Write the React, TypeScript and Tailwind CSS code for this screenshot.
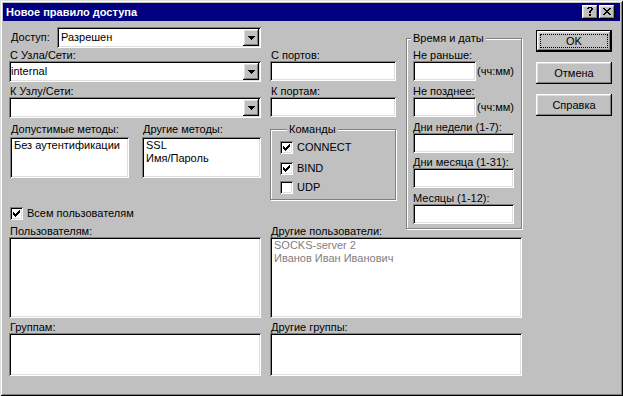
import type { ReactNode } from "react";

const sunken =
  "bg-white shadow-[inset_1px_1px_0_#808080,inset_-1px_-1px_0_#fff,inset_2px_2px_0_#000,inset_-2px_-2px_0_#dfdfdf]";
const raised =
  "bg-[#c0c0c0] shadow-[inset_-1px_-1px_0_#000,inset_1px_1px_0_#fff,inset_-2px_-2px_0_#808080,inset_2px_2px_0_#dfdfdf]";
const etched = "border border-[#808080] shadow-[1px_1px_0_#fff,inset_1px_1px_0_#fff]";

const CHECK = ["......#", ".....##", "#...###", "##.###.", "#####..", ".###...", "..#...."];
const ARROW = ["#######", ".#####.", "..###..", "...#..."];
const CLOSE = ["##....##", ".##..##.", "..####..", "...##...", "..####..", ".##..##.", "##....##"];
const HELP = [".####.", "##..##", "....##", "...##.", "..##..", "..##..", "......", "..##..", "..##.."];

function Pix({ rows }: { rows: string[] }) {
  const w = rows[0].length;
  const h = rows.length;
  return (
    <svg width={w} height={h} viewBox={`0 0 ${w} ${h}`} shapeRendering="crispEdges" className="block">
      {rows.flatMap((r, y) =>
        r.split("").map((c, x) =>
          c === "#" ? <rect key={`${x}-${y}`} x={x} y={y} width={1} height={1} fill="#000" /> : null
        )
      )}
    </svg>
  );
}

function Label({ children, className = "" }: { children: ReactNode; className?: string }) {
  return <div className={`h-[12px] whitespace-nowrap leading-[13px] ${className}`}>{children}</div>;
}

function Edit({ className = "" }: { className?: string }) {
  return <div className={`h-[20px] ${sunken} ${className}`} />;
}

function Combo({ value, className = "", pad = "pl-[2px]" }: { value: string; className?: string; pad?: string }) {
  return (
    <div className={`flex h-[21px] items-center pr-[2px] ${sunken} ${className}`}>
      <span className={`flex-1 leading-[13px] ${pad}`}>{value}</span>
      <span className={`flex h-[17px] w-[16px] items-start justify-center pt-[7px] ${raised}`}>
        <Pix rows={ARROW} />
      </span>
    </div>
  );
}

function ListBox({ items = [], className = "", gray = false }: { items?: string[]; className?: string; gray?: boolean }) {
  return (
    <div className={`overflow-hidden pl-[4px] pt-[2px] leading-[13px] ${sunken} ${gray ? "text-[#808080]" : ""} ${className}`}>
      {items.map((it) => (
        <div key={it} className="whitespace-nowrap">{it}</div>
      ))}
    </div>
  );
}

function Check({ checked, label, className = "" }: { checked: boolean; label: string; className?: string }) {
  return (
    <div className={`flex h-[13px] items-center ${className}`}>
      <span className={`flex h-[13px] w-[13px] shrink-0 items-center justify-center ${sunken}`}>
        {checked && <Pix rows={CHECK} />}
      </span>
      <span className="ml-[4px] whitespace-nowrap leading-[13px]">{label}</span>
    </div>
  );
}

function GroupBox({
  title,
  titleClass,
  className = "",
  children,
}: {
  title: string;
  titleClass: string;
  className?: string;
  children: ReactNode;
}) {
  return (
    <div className={`flex flex-col ${etched} ${className}`}>
      <span className={`-mt-[7px] block h-[13px] w-fit bg-[#c0c0c0] px-[2px] leading-[13px] ${titleClass}`}>
        {title}
      </span>
      {children}
    </div>
  );
}

function Button({ children, isDefault = false, className = "" }: { children: ReactNode; isDefault?: boolean; className?: string }) {
  if (isDefault) {
    return (
      <div className={`flex h-[22px] w-[76px] border border-black p-[3px] ${raised} ${className}`}>
        <span className="flex flex-1 items-center justify-center border border-dotted border-black leading-[13px]">
          {children}
        </span>
      </div>
    );
  }
  return (
    <div className={`flex h-[22px] w-[76px] items-center justify-center leading-[13px] ${raised} ${className}`}>
      {children}
    </div>
  );
}

export default function App() {
  return (
    <div className="h-[396px] w-[623px] bg-[#c0c0c0] p-[3px] font-['Liberation_Sans',Arial,sans-serif] text-[11px] text-black shadow-[inset_1px_1px_0_#dfdfdf,inset_-1px_-1px_0_#000,inset_2px_2px_0_#fff,inset_-2px_-2px_0_#808080]">
      {/* title bar */}
      <div className="flex h-[18px] items-center bg-[#000080] pl-[3px] pr-[5px]">
        <span className="flex-1 font-bold leading-[18px] text-white">Новое правило доступа</span>
        <span className={`flex h-[14px] w-[16px] justify-center pt-[2px] ${raised}`}>
          <Pix rows={HELP} />
        </span>
        <span className={`ml-[1px] flex h-[14px] w-[16px] justify-center pt-[3px] ${raised}`}>
          <Pix rows={CLOSE} />
        </span>
      </div>

      <div className="flex pl-[6px]">
        <div className="flex w-[513px] flex-col">
          <div className="flex h-[204px]">
            {/* left column */}
            <div className="flex w-[252px] flex-col">
              <div className="mt-[6px] flex h-[21px] items-center">
                <span className="w-[48px] pl-[2px] leading-[13px]">Доступ:</span>
                <Combo value="Разрешен" className="flex-1" pad="pl-[4px]" />
              </div>
              <Label className="mt-[1px] pl-[1px]">С Узла/Сети:</Label>
              <Combo value="internal" />
              <Label className="mt-[3px] pl-[1px]">К Узлу/Сети:</Label>
              <Combo value="" />
              <div className="mt-[5px] flex">
                <div className="ml-[1px] w-[119px]">
                  <Label className="pl-[1px]">Допустимые методы:</Label>
                  <ListBox className="mt-[2px] h-[41px]" items={["Без аутентификации"]} />
                </div>
                <div className="ml-auto w-[119px]">
                  <Label className="pl-[1px]">Другие методы:</Label>
                  <ListBox className="mt-[2px] h-[41px]" items={["SSL", "Имя/Пароль"]} />
                </div>
              </div>
              <Check checked label="Всем пользователям" className="ml-[1px] mt-[29px]" />
            </div>

            {/* ports / commands */}
            <div className="ml-[9px] flex w-[126px] flex-col">
              <Label className="mt-[28px] pl-[1px]">С портов:</Label>
              <Edit />
              <Label className="mt-[4px] pl-[1px]">К портам:</Label>
              <Edit />
              <GroupBox title="Команды" titleClass="ml-[7px]" className="mt-[12px] h-[71px] pl-[9px]">
                <Check checked label="CONNECT" className="mt-[5px]" />
                <Check checked label="BIND" className="mt-[8px]" />
                <Check checked={false} label="UDP" className="mt-[6px]" />
              </GroupBox>
            </div>

            {/* time and dates */}
            <GroupBox
              title="Время и даты"
              titleClass="ml-[-2px]"
              className="ml-[10px] mt-[17px] h-[191px] w-[116px] shrink-0 pl-[6px]"
            >
              <Label className="mt-[4px]">Не раньше:</Label>
              <div className="flex items-center">
                <Edit className="w-[63px]" />
                <span className="ml-[1px] leading-[13px]">(чч:мм)</span>
              </div>
              <Label className="mt-[4px]">Не позднее:</Label>
              <div className="flex items-center">
                <Edit className="w-[63px]" />
                <span className="ml-[1px] leading-[13px]">(чч:мм)</span>
              </div>
              <Label className="mt-[4px]">Дни недели (1-7):</Label>
              <Edit className="w-[101px]" />
              <Label className="mt-[3px]">Дни месяца (1-31):</Label>
              <Edit className="w-[101px]" />
              <Label className="mt-[4px]">Месяцы (1-12):</Label>
              <Edit className="w-[101px]" />
            </GroupBox>
          </div>

          {/* users and groups */}
          <div className="grid grid-cols-[252px_252px] gap-x-[9px]">
            <div>
              <Label className="pl-[1px]">Пользователям:</Label>
              <ListBox className="h-[81px]" />
            </div>
            <div>
              <Label className="pl-[1px]">Другие пользователи:</Label>
              <ListBox className="h-[81px]" gray items={["SOCKS-server 2", "Иванов Иван Иванович"]} />
            </div>
            <div>
              <Label className="mt-[3px] pl-[1px]">Группам:</Label>
              <ListBox className="h-[43px]" />
            </div>
            <div>
              <Label className="mt-[3px] pl-[1px]">Другие группы:</Label>
              <ListBox className="h-[43px]" />
            </div>
          </div>
        </div>

        {/* buttons */}
        <div className="ml-[14px] flex w-[76px] flex-col">
          <Button isDefault className="mt-[9px]">OK</Button>
          <Button className="mt-[10px]">Отмена</Button>
          <Button className="mt-[10px]">Справка</Button>
        </div>
      </div>
    </div>
  );
}
